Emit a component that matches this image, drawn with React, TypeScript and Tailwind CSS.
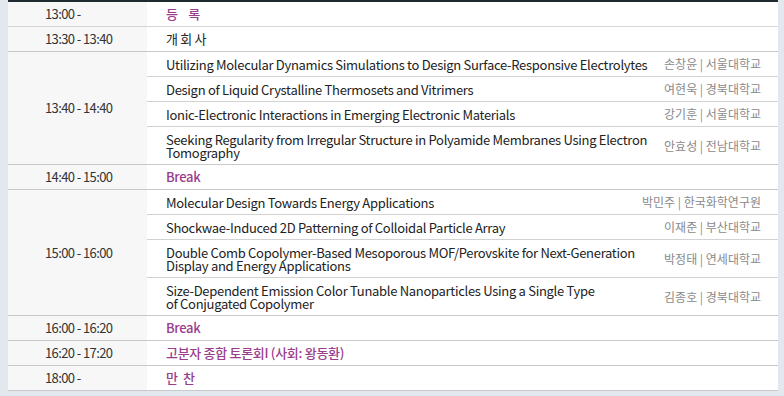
import React from 'react';

type Talk = { title: string[]; speaker: string };
type Group =
  | { time: string; kind: 'label'; text: string; accent?: boolean }
  | { time: string; kind: 'talks'; talks: Talk[] };

const groups: Group[] = [
  { time: '13:00 -', kind: 'label', text: '등\u00a0\u00a0\u00a0\u00a0록', accent: true },
  { time: '13:30 - 13:40', kind: 'label', text: '개 회 사' },
  {
    time: '13:40 - 14:40',
    kind: 'talks',
    talks: [
      { title: ['Utilizing Molecular Dynamics Simulations to Design Surface-Responsive Electrolytes'], speaker: '손창윤 | 서울대학교' },
      { title: ['Design of Liquid Crystalline Thermosets and Vitrimers'], speaker: '여현욱 | 경북대학교' },
      { title: ['Ionic-Electronic Interactions in Emerging Electronic Materials'], speaker: '강기훈 | 서울대학교' },
      { title: ['Seeking Regularity from Irregular Structure in Polyamide Membranes Using Electron', 'Tomography'], speaker: '안효성 | 전남대학교' },
    ],
  },
  { time: '14:40 - 15:00', kind: 'label', text: 'Break', accent: true },
  {
    time: '15:00 - 16:00',
    kind: 'talks',
    talks: [
      { title: ['Molecular Design Towards Energy Applications'], speaker: '박민주 | 한국화학연구원' },
      { title: ['Shockwae-Induced 2D Patterning of Colloidal Particle Array'], speaker: '이재준 | 부산대학교' },
      { title: ['Double Comb Copolymer-Based Mesoporous MOF/Perovskite for Next-Generation', 'Display and Energy Applications'], speaker: '박정태 | 연세대학교' },
      { title: ['Size-Dependent Emission Color Tunable Nanoparticles Using a Single Type', 'of Conjugated Copolymer'], speaker: '김종호 | 경북대학교' },
    ],
  },
  { time: '16:00 - 16:20', kind: 'label', text: 'Break', accent: true },
  { time: '16:20 - 17:20', kind: 'label', text: '고분자 종합 토론회I (사회: 왕동환)', accent: true },
  { time: '18:00 -', kind: 'label', text: '만\u00a0\u00a0찬', accent: true },
];

const font = { fontFamily: '"Noto Sans CJK KR", "Noto Sans", sans-serif' };

// row height incl. bottom border (border-box)
const rowHeight = (lines: number, last: boolean) => {
  if (lines > 1) return last ? 'h-[37px]' : 'h-[38px] border-b border-[#d2d2d2]';
  return last ? 'h-6' : 'h-[25px] border-b border-[#d2d2d2]';
};

export default function App() {
  return (
    <div className="min-h-[396px] w-[784px] bg-[#e3e8ef] pl-2 pr-[6px] pb-[5px]" style={font}>
      <div className="border-t-2 border-[#1f2b31] bg-white text-[13px] leading-[12px] tracking-[-0.3px]">
        {groups.map((g, i) => (
          <div
            key={i}
            className={`flex border-b ${i === 0 ? 'border-[#d6d6d6]' : 'border-[#c9c9c9]'}`}
          >
            <div className="flex w-[139px] shrink-0 items-center whitespace-pre bg-[#f7f7f7] pl-[37px] text-[#333] tracking-[-0.6px]">
              {g.time}
            </div>
            <div className="min-w-0 flex-1">
              {g.kind === 'label' ? (
                <div
                  className={`flex h-6 items-center pl-[19px] ${
                    g.accent ? 'font-medium text-[#9a3d8d]' : 'text-[#222]'
                  }`}
                >
                  {g.text}
                </div>
              ) : (
                g.talks.map((t, j) => (
                  <div
                    key={j}
                    className={`flex items-center pl-[19px] pr-[17px] ${rowHeight(
                      t.title.length,
                      j === g.talks.length - 1
                    )}`}
                  >
                    <div className="min-w-0 flex-1 whitespace-nowrap leading-[13px] text-[#222]">
                      {t.title.map((l, k) => (
                        <div key={k}>{l}</div>
                      ))}
                    </div>
                    <div className="shrink-0 pl-2 text-right text-[12px] tracking-normal text-[#8a8a8a]">
                      {t.speaker}
                    </div>
                  </div>
                ))
              )}
            </div>
          </div>
        ))}
      </div>
    </div>
  );
}
